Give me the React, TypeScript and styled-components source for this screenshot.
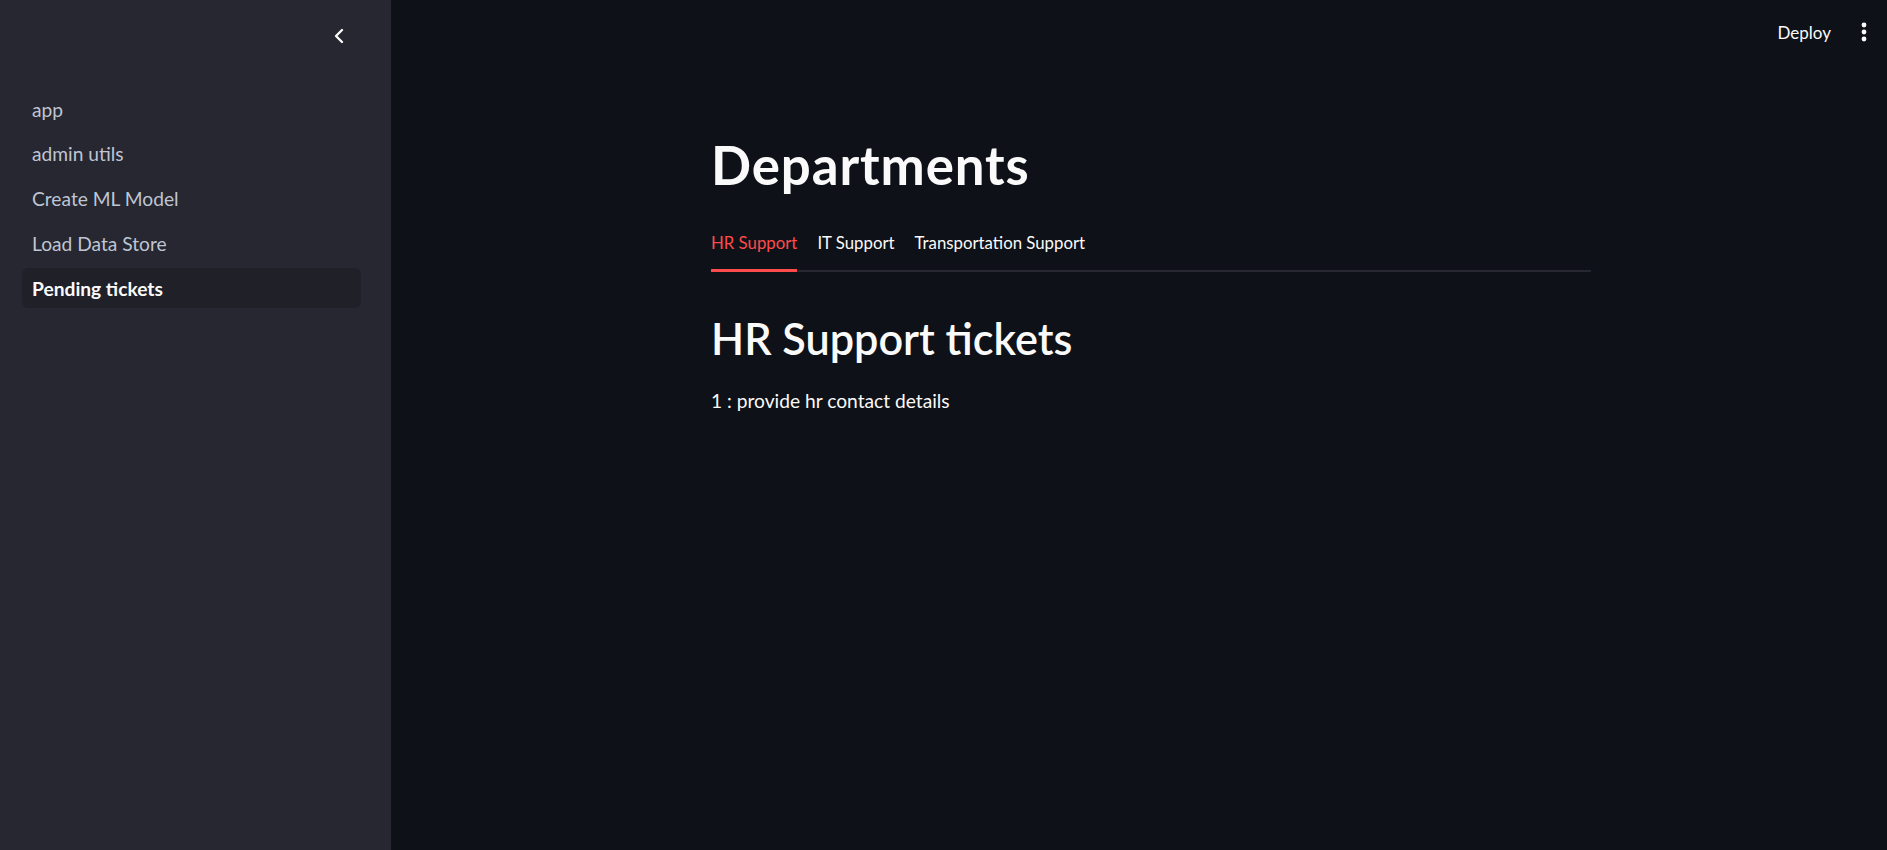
import React from "react";
import styled, { createGlobalStyle } from "styled-components";

const Global = createGlobalStyle`
  html, body { margin: 0; padding: 0; background: #0e1117; }
  body { font-family: "Source Sans Pro", Lato, "Noto Sans", sans-serif; color: #fafafa; }
  * { box-sizing: border-box; }
`;

const Shell = styled.div`
  display: flex;
  width: 100%;
  height: 850px;
  overflow: hidden;
`;

const Sidebar = styled.aside`
  width: 391px;
  flex: none;
  background: #262730;
  display: flex;
  flex-direction: column;
  padding: 0 30px 0 22px;
`;

const SideHeader = styled.div`
  height: 89px;
  display: flex;
  justify-content: flex-end;
  align-items: flex-start;
  padding-top: 28px;
  padding-right: 15px;
`;

const IconButton = styled.button`
  background: none;
  border: none;
  padding: 0;
  color: #fafafa;
  display: flex;
  cursor: pointer;
`;

const Nav = styled.nav`
  display: flex;
  flex-direction: column;
  gap: 4.8px;
`;

const NavItem = styled.a<{ $active?: boolean }>`
  height: 40px;
  display: flex;
  align-items: center;
  padding-left: 10px;
  border-radius: 6px;
  font-size: 19.2px;
  text-decoration: none;
  color: ${(p) => (p.$active ? "#fafafa" : "#bfc5d3")};
  font-weight: ${(p) => (p.$active ? 700 : 400)};
  background: ${(p) => (p.$active ? "#1f2028" : "transparent")};
`;

const Main = styled.main`
  flex: 1;
  display: flex;
  flex-direction: column;
  background: #0e1117;
`;

const TopBar = styled.header`
  height: 66px;
  display: flex;
  justify-content: flex-end;
  align-items: center;
  gap: 30px;
  padding-right: 20px;
  margin-top: -1px;
`;

const DeployButton = styled.button`
  background: none;
  border: none;
  color: #fafafa;
  font-family: inherit;
  font-size: 17px;
  padding: 0;
  cursor: pointer;
`;

const Content = styled.div`
  width: 880px;
  margin-left: 320px;
  padding-top: 68px;
  display: flex;
  flex-direction: column;
`;

const Title = styled.h1`
  margin: 0;
  font-size: 52.8px;
  font-weight: 700;
  letter-spacing: 0.9px;
  line-height: 1.2;
  color: #fafafa;
`;

const Tabs = styled.div`
  margin-top: 28px;
  display: flex;
  gap: 20px;
  border-bottom: 2px solid #262730;
  height: 48px;
`;

const Tab = styled.div<{ $active?: boolean }>`
  position: relative;
  font-size: 16.8px;
  display: flex;
  align-items: center;
  height: 46px;
  padding-bottom: 9px;
  color: ${(p) => (p.$active ? "#ff4b4b" : "#fafafa")};
  &::after {
    content: "";
    position: absolute;
    left: 0;
    right: 0;
    bottom: -2px;
    height: 3px;
    background: ${(p) => (p.$active ? "#ff4b4b" : "transparent")};
  }
`;

const SubTitle = styled.h2`
  margin: 41px 0 0;
  font-size: 43.2px;
  font-weight: 600;
  line-height: 1.2;
  color: #fafafa;
`;

const Text = styled.p`
  margin: 21px 0 0;
  font-size: 19.2px;
  line-height: 1.6;
  color: #fafafa;
`;

const Chevron = () => (
  <svg width="14" height="16" viewBox="0 0 14 16" fill="none">
    <path d="M10 2 L4 8 L10 14" stroke="#fafafa" strokeWidth="2.4" strokeLinecap="round" strokeLinejoin="round" />
  </svg>
);

const Dots = () => (
  <svg width="6" height="20" viewBox="0 0 6 20">
    <circle cx="3" cy="3" r="2.4" fill="#fafafa" />
    <circle cx="3" cy="10" r="2.4" fill="#fafafa" />
    <circle cx="3" cy="17" r="2.4" fill="#fafafa" />
  </svg>
);

const pages = ["app", "admin utils", "Create ML Model", "Load Data Store", "Pending tickets"];

export default function App() {
  return (
    <>
      <Global />
      <Shell>
        <Sidebar>
          <SideHeader>
            <IconButton aria-label="Collapse sidebar">
              <Chevron />
            </IconButton>
          </SideHeader>
          <Nav>
            {pages.map((p) => (
              <NavItem key={p} $active={p === "Pending tickets"}>
                {p}
              </NavItem>
            ))}
          </Nav>
        </Sidebar>
        <Main>
          <TopBar>
            <DeployButton>Deploy</DeployButton>
            <IconButton aria-label="Menu">
              <Dots />
            </IconButton>
          </TopBar>
          <Content>
            <Title>Departments</Title>
            <Tabs>
              <Tab $active>HR Support</Tab>
              <Tab>IT Support</Tab>
              <Tab>Transportation Support</Tab>
            </Tabs>
            <SubTitle>HR Support tickets</SubTitle>
            <Text>1 : provide hr contact details</Text>
          </Content>
        </Main>
      </Shell>
    </>
  );
}
